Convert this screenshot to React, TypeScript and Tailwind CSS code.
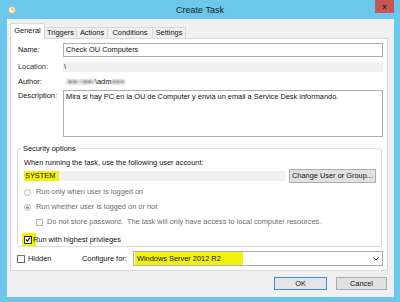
import React from "react";

function Check() {
  return (
    <svg width="7" height="7" viewBox="0 0 7 7" className="block">
      <path d="M1 3.5 L2.8 5.4 L6 1.2" fill="none" stroke="#111" strokeWidth="1.4" />
    </svg>
  );
}

export default function App() {
  return (
    <div className="w-[400px] h-[302px] bg-[#6cc7ec] flex flex-col overflow-hidden text-[7.4px] leading-none text-[#111] font-['Liberation_Sans',Arial,sans-serif]">
      {/* Title bar */}
      <div className="h-[19px] grid grid-cols-[1fr_auto_1fr] shrink-0">
        <div className="flex items-center pl-[8px] pt-[1px]">
          <div className="w-[8px] h-[8px] rounded-full bg-[#f7f3e2] border border-[#c9b070] relative">
            <svg width="6" height="6" viewBox="0 0 6 6" className="absolute left-0 top-0">
              <path d="M3 1.2 L3 3 L4.5 3" stroke="#8a7a50" strokeWidth="0.7" fill="none" />
            </svg>
          </div>
        </div>
        <div className="flex items-center pt-[1px] text-[9px] text-[#1a1a1a]">Create Task</div>
        <div className="flex justify-end items-start pr-[6px]">
          <div className="w-[19px] h-[13px] bg-[#c75550] flex items-center justify-center text-[8px] font-bold text-[#222] leading-none">x</div>
        </div>
      </div>

      {/* Client area */}
      <div className="flex-1 ml-[7px] mr-[6px] mb-[5px] bg-[#f0f0f0] flex flex-col pt-[4px] pl-[3px] pr-[6px]">
        {/* Tabs */}
        <div className="flex items-end h-[15px] shrink-0">
          <div className="w-[35px] h-[16px] bg-white border border-[#d9d9d9] border-b-0 relative z-10 mb-[-1px] flex items-center justify-center pb-[1px]">General</div>
          <div className="w-[32px] h-[11px] bg-[#f0f0f0] border border-[#d9d9d9] border-b-0 border-l-0 flex items-center justify-center">Triggers</div>
          <div className="w-[31px] h-[11px] bg-[#f0f0f0] border border-[#d9d9d9] border-b-0 border-l-0 flex items-center justify-center">Actions</div>
          <div className="w-[45px] h-[11px] bg-[#f0f0f0] border border-[#d9d9d9] border-b-0 border-l-0 flex items-center justify-center">Conditions</div>
          <div className="w-[33px] h-[11px] bg-[#f0f0f0] border border-[#d9d9d9] border-b-0 border-l-0 flex items-center justify-center">Settings</div>
        </div>

        {/* Tab page */}
        <div className="h-[233px] bg-white border border-[#d9d9d9] flex flex-col pt-[4px] pl-[7px] pr-[4px]">
          {/* Name */}
          <div className="h-[14px] flex items-center">
            <div className="w-[45px]">Name:</div>
            <div className="flex-1 h-full border border-[#abadb3] flex items-center pl-[2px]">Check OU Computers</div>
          </div>
          {/* Location */}
          <div className="h-[10px] mt-[5px] flex items-center">
            <div className="w-[45px] text-[#333]">Location:</div>
            <div className="flex-1 h-full bg-[#f0f0f0] flex items-center pl-[1px]">\</div>
          </div>
          {/* Author */}
          <div className="h-[10px] mt-[5px] flex items-center">
            <div className="w-[45px]">Author:</div>
            <div className="flex items-center pl-[3px]">
              <span className="blur-[1px] text-[#888]">I■■nl■■ll</span>
              <span>\adm</span>
              <span className="blur-[1px] text-[#999]">■■■</span>
            </div>
          </div>
          {/* Description */}
          <div className="h-[47px] mt-[3px] flex items-start">
            <div className="w-[45px] mt-[2px]">Description:</div>
            <div className="flex-1 h-full border border-[#abadb3] pl-[2px] pt-[2px]">
              Mira si hay PC en la OU de Computer y envia un email a Service Desk informando.
            </div>
          </div>

          {/* Security options group */}
          <div className="h-[99px] mt-[11px] ml-[-1px] mr-[1px] border border-[#dcdcdc] rounded-[2px] relative flex flex-col pt-[10px] pl-[6px] pr-[5px]">
            <div className="absolute left-[4px] top-[-4px] bg-white px-[1px]">Security options</div>
            <div className="h-[8px] flex items-center">When running the task, use the following user account:</div>
            <div className="h-[14px] mt-[2px] flex items-center gap-[4px]">
              <div className="flex-1 h-[10px] bg-[#f0f0f0] flex items-center">
                <span className="bg-[#f2f20a] h-full flex items-center pl-[1px] pr-[4px]">SYSTEM</span>
              </div>
              <div className="w-[87px] h-full bg-[#e1e1e1] border border-[#adadad] flex items-center justify-center">Change User or Group...</div>
            </div>
            {/* Radio 1 */}
            <div className="h-[10px] mt-[4px] flex items-center text-[#6d6d6d]">
              <div className="w-[7px] h-[7px] rounded-full border border-[#b5b5b5] bg-white ml-[0px] mr-[5px]" />
              Run only when user is logged on
            </div>
            {/* Radio 2 */}
            <div className="h-[10px] mt-[5px] flex items-center text-[#6d6d6d]">
              <div className="w-[7px] h-[7px] rounded-full border border-[#b5b5b5] bg-white mr-[5px] flex items-center justify-center">
                <div className="w-[3px] h-[3px] rounded-full bg-[#9a9a9a]" />
              </div>
              Run whether user is logged on or not
            </div>
            {/* Do not store */}
            <div className="h-[10px] mt-[5px] flex items-center text-[#6d6d6d] pl-[12px]">
              <div className="w-[7px] h-[7px] border border-[#b5b5b5] bg-white mr-[4px]" />
              Do not store password.&nbsp; The task will only have access to local computer resources.
            </div>
            {/* Run with highest */}
            <div className="h-[13px] mt-[6px] flex items-center">
              <div className="ml-[-2px] w-[14px] h-[13px] bg-[#f2f20a] flex items-center pl-[2px]">
                <div className="w-[8px] h-[8px] border border-[#333] bg-white flex items-center justify-center">
                  <Check />
                </div>
              </div>
              <span className="ml-[-3px]">Run with highest privileges</span>
            </div>
          </div>

          {/* Hidden / configure */}
          <div className="h-[15px] mt-[4px] flex items-center ml-[-1px]">
            <div className="w-[8px] h-[8px] border border-[#707070] bg-white mr-[3px]" />
            <div className="w-[54px]">Hidden</div>
            <div className="w-[51px]">Configure for:</div>
            <div className="flex-1 h-full border border-[#abadb3] flex items-center pl-[1px] pr-[3px]">
              <span className="bg-[#f2f20a] h-[13px] flex items-center pl-[2px] w-[108px]">Windows Server 2012 R2</span>
              <span className="flex-1" />
              <svg width="6" height="4" viewBox="0 0 6 4">
                <path d="M0.5 0.5 L3 3 L5.5 0.5" stroke="#333" strokeWidth="0.9" fill="none" />
              </svg>
            </div>
          </div>
        </div>

        {/* Buttons */}
        <div className="flex justify-end gap-[9px] mt-[6px] pr-[1px]">
          <div className="w-[53px] h-[13px] bg-[#e5e5e5] border border-[#3c8fd8] flex items-center justify-center">OK</div>
          <div className="w-[51px] h-[13px] bg-[#e1e1e1] border border-[#adadad] flex items-center justify-center">Cancel</div>
        </div>
      </div>
    </div>
  );
}
